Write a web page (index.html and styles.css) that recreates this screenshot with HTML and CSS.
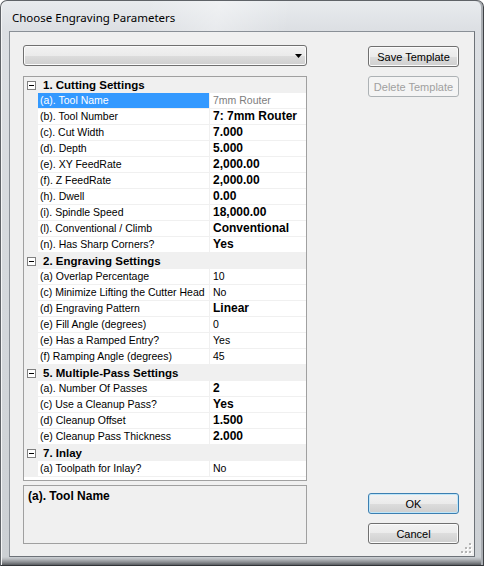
FILE: index.html
```html
<!DOCTYPE html>
<html>
<head>
<meta charset="utf-8">
<title>Choose Engraving Parameters</title>
<link rel="stylesheet" href="styles.css">
</head>
<body>
<div class="window">
  <div class="titlebar"><span class="title">Choose Engraving Parameters</span></div>
  <div class="client">
    <div class="left">
      <div class="combo"><svg class="arrow" width="7" height="4" viewBox="0 0 7 4"><path d="M0 0H7L3.5 4Z" fill="#000"/></svg></div>
      <div class="grid">
        <div class="cat"><span class="toggle"><span class="minus"></span></span><span class="cat-label">1. Cutting Settings</span></div>
        <div class="row sel"><span class="margin"></span><span class="label">(a). Tool Name</span><span class="value ro">7mm Router</span></div>
        <div class="row"><span class="margin"></span><span class="label">(b). Tool Number</span><span class="value b">7: 7mm Router</span></div>
        <div class="row"><span class="margin"></span><span class="label">(c). Cut Width</span><span class="value b">7.000</span></div>
        <div class="row"><span class="margin"></span><span class="label">(d). Depth</span><span class="value b">5.000</span></div>
        <div class="row"><span class="margin"></span><span class="label">(e). XY FeedRate</span><span class="value b">2,000.00</span></div>
        <div class="row"><span class="margin"></span><span class="label">(f). Z FeedRate</span><span class="value b">2,000.00</span></div>
        <div class="row"><span class="margin"></span><span class="label">(h). Dwell</span><span class="value b">0.00</span></div>
        <div class="row"><span class="margin"></span><span class="label">(i). Spindle Speed</span><span class="value b">18,000.00</span></div>
        <div class="row"><span class="margin"></span><span class="label">(l). Conventional / Climb</span><span class="value b">Conventional</span></div>
        <div class="row"><span class="margin"></span><span class="label">(n). Has Sharp Corners?</span><span class="value b">Yes</span></div>
        <div class="cat"><span class="toggle"><span class="minus"></span></span><span class="cat-label">2. Engraving Settings</span></div>
        <div class="row"><span class="margin"></span><span class="label">(a) Overlap Percentage</span><span class="value">10</span></div>
        <div class="row"><span class="margin"></span><span class="label">(c) Minimize Lifting the Cutter Head</span><span class="value">No</span></div>
        <div class="row"><span class="margin"></span><span class="label">(d) Engraving Pattern</span><span class="value b">Linear</span></div>
        <div class="row"><span class="margin"></span><span class="label">(e) Fill Angle (degrees)</span><span class="value">0</span></div>
        <div class="row"><span class="margin"></span><span class="label">(e) Has a Ramped Entry?</span><span class="value">Yes</span></div>
        <div class="row"><span class="margin"></span><span class="label">(f) Ramping Angle (degrees)</span><span class="value">45</span></div>
        <div class="cat"><span class="toggle"><span class="minus"></span></span><span class="cat-label">5. Multiple-Pass Settings</span></div>
        <div class="row"><span class="margin"></span><span class="label">(a). Number Of Passes</span><span class="value b">2</span></div>
        <div class="row"><span class="margin"></span><span class="label">(c) Use a Cleanup Pass?</span><span class="value b">Yes</span></div>
        <div class="row"><span class="margin"></span><span class="label">(d) Cleanup Offset</span><span class="value b">1.500</span></div>
        <div class="row"><span class="margin"></span><span class="label">(e) Cleanup Pass Thickness</span><span class="value b">2.000</span></div>
        <div class="cat"><span class="toggle"><span class="minus"></span></span><span class="cat-label">7. Inlay</span></div>
        <div class="row"><span class="margin"></span><span class="label">(a) Toolpath for Inlay?</span><span class="value">No</span></div>
      </div>
      <div class="desc">(a). Tool Name</div>
    </div>
    <div class="right">
      <button class="btn">Save Template</button>
      <button class="btn" disabled>Delete Template</button>
      <div class="spacer"></div>
      <button class="btn default">OK</button>
      <button class="btn">Cancel</button>
    </div>
    <svg class="grip" width="11" height="11" viewBox="0 0 11 11">
      <g fill="#fff">
        <rect x="9" y="1" width="2" height="2"/><rect x="9" y="5" width="2" height="2"/><rect x="5" y="5" width="2" height="2"/>
        <rect x="9" y="9" width="2" height="2"/><rect x="5" y="9" width="2" height="2"/><rect x="1" y="9" width="2" height="2"/>
      </g>
      <g fill="#b4b4b4">
        <rect x="8" y="0" width="2" height="2"/><rect x="8" y="4" width="2" height="2"/><rect x="4" y="4" width="2" height="2"/>
        <rect x="8" y="8" width="2" height="2"/><rect x="4" y="8" width="2" height="2"/><rect x="0" y="8" width="2" height="2"/>
      </g>
    </svg>
  </div>
</div>
</body>
</html>
```
FILE: styles.css
```css
html, body {
  margin: 0;
  padding: 0;
}
body {
  width: 484px;
  height: 566px;
  overflow: hidden;
  background: #ffffff;
  font-family: "Liberation Sans", Arial, sans-serif;
}
.window {
  width: 484px;
  height: 566px;
  box-sizing: border-box;
  border: 1px solid #5f6368;
  border-right-color: #3f4246;
  border-bottom-color: #323438;
  border-radius: 7px 7px 0 0;
  background: linear-gradient(to bottom, #e8ebee 0px, #dcdfe3 30px, #d4d8dc 300px, #ccd0d4 556px, #b9bcc0 558px, #8d9094 561px, #5a5d61 564px);
  box-shadow: inset -2px 0 0 #a9adb2, inset 1px 0 0 #f4f5f6;
  display: flex;
  flex-direction: column;
}
.titlebar {
  height: 30px;
  box-sizing: border-box;
  padding: 3px 0 0 11px;
  display: flex;
  align-items: center;
  background: linear-gradient(100deg, rgba(255,255,255,0) 30%, rgba(255,255,255,0.35) 45%, rgba(255,255,255,0) 60%);
  border-radius: 6px 6px 0 0;
}
.title {
  font-family: "Noto Sans", "Open Sans", sans-serif;
  font-size: 11.5px;
  color: #000;
}
.client {
  flex: 1;
  margin: 0 8px 8px 8px;
  border: 1px solid #8a9097;
  border-right-color: #6d7278;
  border-bottom-color: #6d7278;
  background: #f0f0f0;
  display: flex;
  gap: 61px;
  padding: 13px 15px 12px 13px;
  position: relative;
  min-height: 0;
}
.left {
  width: 284px;
  display: flex;
  flex-direction: column;
}
.combo {
  height: 21px;
  box-sizing: border-box;
  border: 1px solid #707070;
  border-radius: 3px;
  background: linear-gradient(to bottom, #f2f2f2 0%, #ebebeb 50%, #dddddd 50%, #cfcfcf 100%);
  box-shadow: inset 0 0 0 1px #fbfbfb;
  display: flex;
  align-items: center;
  justify-content: flex-end;
  padding-right: 4px;
  margin-bottom: 10px;
}
.arrow {
  display: block;
  margin-top: 1px;
}
.grid {
  height: 405px;
  box-sizing: border-box;
  border: 1px solid #a0a0a0;
  background: #ffffff;
  margin-bottom: 4px;
  overflow: hidden;
}
.cat {
  height: 16px;
  background: #f0f0f0;
  display: flex;
  align-items: center;
}
.toggle {
  width: 9px;
  height: 9px;
  box-sizing: border-box;
  border: 1px solid #808080;
  background: #ffffff;
  margin-left: 3px;
  display: flex;
  align-items: center;
  justify-content: center;
}
.minus {
  width: 5px;
  height: 1px;
  background: #000;
}
.cat-label {
  margin-left: 7px;
  font-weight: bold;
  font-size: 11.5px;
  color: #000;
}
.row {
  display: grid;
  grid-template-columns: 14px 172px 1fr;
  height: 16px;
}
.margin {
  background: #f0f0f0;
}
.label, .value {
  box-sizing: border-box;
  border-bottom: 1px solid #f0f0f0;
  line-height: 15px;
  white-space: nowrap;
  overflow: hidden;
  color: #000;
}
.label {
  border-right: 1px solid #f0f0f0;
  padding-left: 2px;
  font-size: 10.5px;
}
.value {
  padding-left: 3px;
  font-size: 10.5px;
}
.value.b {
  font-weight: bold;
  font-size: 12px;
}
.value.ro {
  color: #7d7d7d;
}
.row.sel .label {
  background: #3399ff;
  color: #ffffff;
}
.desc {
  height: 59px;
  box-sizing: border-box;
  border: 1px solid #a0a0a0;
  background: #f0f0f0;
  padding: 3px 0 0 4px;
  font-weight: bold;
  font-size: 12px;
  color: #000;
}
.right {
  width: 91px;
  display: flex;
  flex-direction: column;
  padding-top: 1px;
}
.spacer {
  flex: 1;
}
.btn {
  height: 21px;
  width: 91px;
  box-sizing: border-box;
  border: 1px solid #707070;
  border-radius: 3px;
  background: linear-gradient(to bottom, #f2f2f2 0%, #ebebeb 50%, #dddddd 50%, #cfcfcf 100%);
  box-shadow: inset 0 0 0 1px #fbfbfb;
  font-family: "Liberation Sans", Arial, sans-serif;
  font-size: 11px;
  color: #000;
  padding: 0;
  margin: 0 0 9px 0;
}
.btn:last-child {
  margin-bottom: 0;
}
.btn:disabled {
  border-color: #adb2b5;
  background: #f4f4f4;
  box-shadow: none;
  color: #a0a0a0;
}
.btn.default {
  border-color: #3c7fb1;
  box-shadow: inset 0 0 0 1px #bfe6f9;
}
.grip {
  position: absolute;
  right: 2px;
  bottom: 2px;
}
```
